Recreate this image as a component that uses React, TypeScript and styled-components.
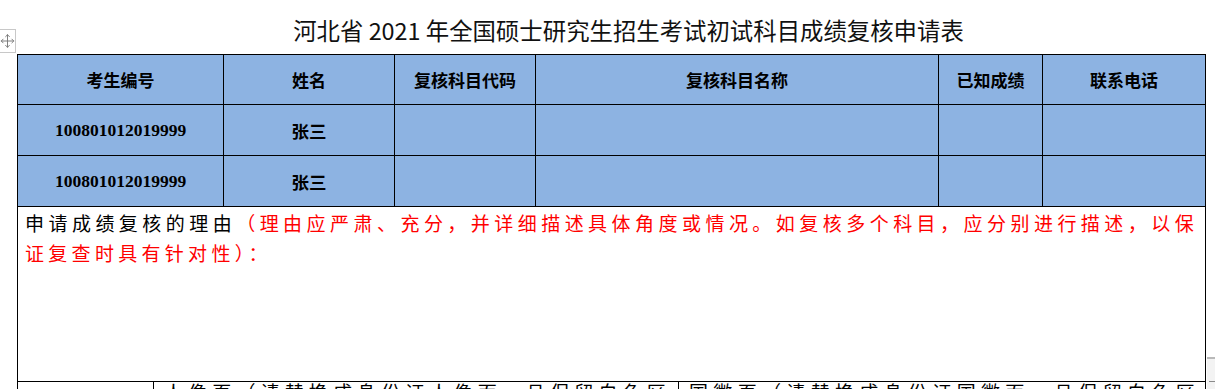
import React from "react";
import styled, { createGlobalStyle } from "styled-components";
import { Move } from "lucide-react";

const GlobalStyle = createGlobalStyle`
	html, body {
		margin: 0;
		padding: 0;
		background: #ffffff;
		overflow: hidden;
	}
	* {
		box-sizing: border-box;
	}
`;

type Column = { title: string; width: number };

const columns: Column[] = [
	{ title: "考生编号", width: 206 },
	{ title: "姓名", width: 171 },
	{ title: "复核科目代码", width: 141 },
	{ title: "复核科目名称", width: 403 },
	{ title: "已知成绩", width: 104 },
	{ title: "联系电话", width: 163 },
];

const rows = [
	["100801012019999", "张三", "", "", "", ""],
	["100801012019999", "张三", "", "", "", ""],
];

const App = () => {
	return (
		<Page>
			<GlobalStyle />
			<MoveHandle>
				<Move size={16} strokeWidth={1.5} />
			</MoveHandle>
			<SidePanel />

			<Title>河北省 2021 年全国硕士研究生招生考试初试科目成绩复核申请表</Title>

			<Sheet>
				<ScoreTable>
					<colgroup>
						{columns.map((c) => (
							<col key={c.title} style={{ width: c.width }} />
						))}
					</colgroup>
					<thead>
						<tr>
							{columns.map((c) => (
								<HeadCell key={c.title}>{c.title}</HeadCell>
							))}
						</tr>
					</thead>
					<tbody>
						{rows.map((r, i) => (
							<tr key={i}>
								{r.map((v, j) => (
									<DataCell key={j}>{v}</DataCell>
								))}
							</tr>
						))}
					</tbody>
				</ScoreTable>

				<ReasonBox>
					<Paragraph>
						申请成绩复核的理由
						<Hint>
							（理由应严肃、充分，并详细描述具体角度或情况。如复核多个科目，应分别进行描述，以保证复查时具有针对性）：
						</Hint>
					</Paragraph>
				</ReasonBox>

				<AttachRow>
					<AttachCell />
					<AttachCell>
						<Paragraph>人像页（请替换成身份证人像面，且保留白色区域，大小适中）</Paragraph>
					</AttachCell>
					<AttachCell>
						<Paragraph>国徽页（请替换成身份证国徽面，且保留白色区域，大小适中）</Paragraph>
					</AttachCell>
				</AttachRow>
			</Sheet>
		</Page>
	);
};

export default App;

const Page = styled.div`
	position: relative;
	width: 1215px;
	height: 389px;
	overflow: hidden;
	background: #ffffff;
`;

const MoveHandle = styled.div`
	position: absolute;
	left: -1px;
	top: 29px;
	width: 17px;
	height: 24px;
	display: flex;
	align-items: center;
	justify-content: center;
	border: 1px solid #c8c8c8;
	background: #ffffff;
	color: #777777;
`;

const SidePanel = styled.div`
	position: absolute;
	left: 1207px;
	top: 357px;
	width: 8px;
	height: 32px;
	background: #f3f3f3;
	border-top: 2px solid #b9b9b9;

	&::after {
		content: "";
		position: absolute;
		left: 2px;
		top: 22px;
		width: 6px;
		height: 1px;
		background: #8a8a8a;
	}
`;

const Title = styled.div`
	height: 54px;
	padding: 15px 0 0 42px;
	text-align: center;
	font-family: "Noto Sans CJK SC", "Noto Sans", sans-serif;
	font-size: 23.4px;
	line-height: 30px;
	color: #111111;
`;

const Sheet = styled.div`
	margin-left: 17px;
	width: 1189px;
`;

const ScoreTable = styled.table`
	width: 1189px;
	table-layout: fixed;
	border-collapse: collapse;
	background: #8db3e2;
`;

const HeadCell = styled.th`
	height: 50px;
	padding: 0;
	border: 1px solid #000000;
	text-align: center;
	font-family: "Noto Sans CJK SC", sans-serif;
	font-size: 17px;
	font-weight: 700;
	color: #000000;
`;

const DataCell = styled.td`
	height: 51px;
	padding: 0;
	border: 1px solid #000000;
	text-align: center;
	font-family: "Liberation Serif", "Noto Sans CJK SC", serif;
	font-size: 17.5px;
	font-weight: 700;
	color: #000000;
`;

const ReasonBox = styled.div`
	height: 174px;
	padding: 1px 7px 0 7px;
	border-left: 1px solid #000000;
	border-right: 1px solid #000000;
`;

const Paragraph = styled.p`
	margin: 0;
	font-family: "Noto Sans CJK SC", sans-serif;
	font-size: 19px;
	line-height: 30px;
	letter-spacing: 4.3px;
	text-align: justify;
	color: #000000;
`;

const Hint = styled.span`
	color: #ff0000;
`;

const AttachRow = styled.div`
	display: grid;
	grid-template-columns: 135px 525px 529px;
	height: 60px;
	border: 1px solid #000000;
`;

const AttachCell = styled.div`
	padding: 0 8px 0 10px;
	border-left: 1px solid #000000;
	overflow: hidden;

	&:first-child {
		border-left: none;
	}

	${Paragraph} {
		line-height: 22px;
		margin-top: -1px;
	}
`;
